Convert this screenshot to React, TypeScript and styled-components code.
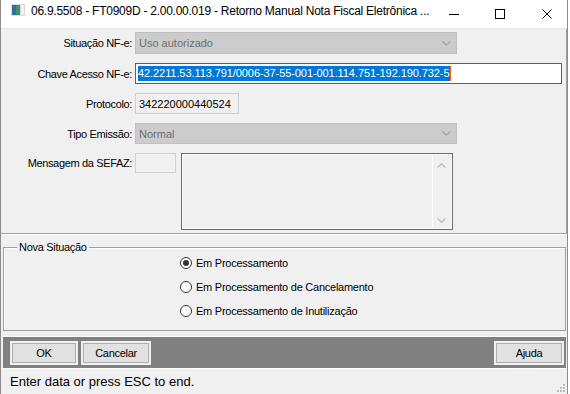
import React from 'react';
import styled, { createGlobalStyle } from 'styled-components';

const Global = createGlobalStyle`
  html, body { margin:0; padding:0; background:#fff; }
  body { font-family:"Liberation Sans", Arial, sans-serif; color:#000; }
`;

const Window = styled.div`
  width:566px; height:394px; display:flex; flex-direction:column;
  border-left:1px solid #8c8c8c; border-right:1px solid #8c8c8c;
  background:#f0f0f0; overflow:hidden;
`;

const TitleBar = styled.div`
  height:29px; flex:none; background:#fff; display:flex; align-items:flex-start;
  box-sizing:border-box; padding-top:4px; border-bottom:1px solid #e3e3e3;
`;
const AppIcon = styled.svg`margin-left:10px; flex:none;`;
const Title = styled.div`
  margin-left:6px; font-size:12px; line-height:14px; white-space:nowrap; flex:1; min-width:0;
  overflow:hidden; letter-spacing:-0.25px;
`;
const Controls = styled.div`display:flex; margin-top:-4px; height:28px; flex:none;`;
const CtlBtn = styled.div<{ $pad?: number }>`
  width:46px; height:28px; display:flex; align-items:center; justify-content:center;
  box-sizing:border-box; padding-left:${p => p.$pad ?? 0}px;
  &:last-child { width:44px; }
`;

const TopPanel = styled.div`
  height:205px; flex:none; box-sizing:border-box; padding-top:3px;
  border-right:1px solid #a0a0a0; border-bottom:1px solid #a0a0a0;
  box-shadow:0 1px 0 #fff; display:flex; flex-direction:column; gap:9px;
`;
const Row = styled.div<{ $top?: boolean }>`
  display:flex; align-items:${p => (p.$top ? 'flex-start' : 'center')}; gap:3px;
`;
const Label = styled.div`
  width:131px; text-align:right; font-size:11px; letter-spacing:-0.35px;
  line-height:20px; white-space:nowrap;
`;
const Combo = styled.div<{ $h?: number }>`
  width:322px; height:${p => p.$h ?? 21}px; box-sizing:border-box; background:#cccccc;
  border:1px solid #bfbfbf; display:flex; align-items:center; justify-content:space-between;
  padding:0 5px 0 3px; font-size:11px; color:#6d6d6d;
`;
const TextBox = styled.div<{ $w: number; $focus?: boolean }>`
  width:${p => p.$w}px; height:21px; box-sizing:border-box;
  border:1px solid ${p => (p.$focus ? '#0078d7' : '#cdcdcd')};
  background:${p => (p.$focus ? '#fff' : '#f0f0f0')};
  display:flex; align-items:center; padding-left:${p => (p.$focus ? 2 : 3)}px;
  font-size:11px; white-space:nowrap; overflow:hidden;
`;
const Selected = styled.span`
  background:#0078d7; color:#fff; line-height:15px; letter-spacing:-0.08px;
`;
const Caret = styled.span`width:1px; height:15px; background:#f7630c; flex:none;`;
const SmallBox = styled.div`
  width:41px; height:20px; box-sizing:border-box; border:1px solid #d0d0d0; background:#f0f0f0;
`;
const Memo = styled.div`
  margin-left:2px; width:272px; height:77px; box-sizing:border-box;
  border:1px solid #6e6e6e; box-shadow:inset 0 0 0 1px #fafafa;
  display:flex; justify-content:flex-end; background:#f0f0f0;
`;
const ScrollTrack = styled.div`
  width:17px; margin:2px 2px 2px 0; border-left:1px solid #fff;
  display:flex; flex-direction:column; justify-content:space-between; align-items:center;
  padding:7px 0 4px;
`;

const Group = styled.fieldset`
  margin:7px 1px 0 2px; padding:0 0 0 15px; height:90px; box-sizing:border-box;
  border:1px solid #a0a0a0; box-shadow:inset 1px 1px 0 #fff; flex:none;
`;
const Legend = styled.legend`
  padding:0 2px; margin-left:-2px; font-size:11px; line-height:12px; letter-spacing:-0.3px;
`;
const RadioList = styled.div`
  margin-left:161px; margin-top:-2px; display:flex; flex-direction:column;
`;
const RadioRow = styled.div`
  height:24px; display:flex; align-items:center; gap:4px;
  font-size:11px; letter-spacing:-0.25px;
  &:last-child { height:23px; }
`;
const RadioDot = styled.span<{ $on?: boolean }>`
  width:12px; height:12px; box-sizing:border-box; border-radius:50%;
  border:1px solid #333; background:#fff; display:flex; align-items:center; justify-content:center;
  &::after { content:""; width:6px; height:6px; border-radius:50%;
    background:${p => (p.$on ? '#333' : 'transparent')}; }
`;

const ButtonBar = styled.div`
  margin:5px 1px 0 2px; height:33px; box-sizing:border-box; flex:none;
  border-top:1px solid #fff; border-bottom:1px solid #fff; background:#808080;
  display:flex; align-items:flex-start; gap:3px; padding:4px 2px 0 7px;
`;
const Btn = styled.div<{ $w: number; $right?: boolean }>`
  width:${p => p.$w}px; height:24px; box-sizing:border-box; background:#e1e1e1;
  border:2px solid #f0f0f0; box-shadow:inset 0 0 0 1px #adadad;
  display:flex; align-items:center; justify-content:center;
  font-size:11px; letter-spacing:-0.3px; margin-left:${p => (p.$right ? 'auto' : '0')};
`;

const StatusBar = styled.div`
  flex:1; display:flex; padding:5px 2px 2px 9px; font-size:13px; line-height:15px;
`;
const Grip = styled.svg`margin-left:auto; align-self:flex-end; flex:none;`;

const Chevron = ({ up, color }: { up?: boolean; color: string }) => (
  <svg width="9" height="5" viewBox="0 0 9 5">
    <path d={up ? 'M0.5 4.5 L4.5 0.8 L8.5 4.5' : 'M0.5 0.5 L4.5 4.2 L8.5 0.5'} fill="none" stroke={color} strokeWidth="1.3" />
  </svg>
);

export default function App() {
  return (
    <>
      <Global />
      <Window>
        <TitleBar>
          <AppIcon width="14" height="12" viewBox="0 0 14 12">
            <rect x="0" y="0" width="14" height="12" fill="#d9d9d9" />
            <rect x="1" y="1" width="8" height="10" fill="#3f8f7a" />
            <rect x="1" y="1" width="4" height="10" fill="#2f6fa0" />
            <rect x="10" y="1" width="3" height="10" fill="#f2f2f2" />
          </AppIcon>
          <Title>06.9.5508 - FT0909D - 2.00.00.019 - Retorno Manual Nota Fiscal Eletrônica ...</Title>
          <Controls>
            <CtlBtn>
              <svg width="10" height="10" viewBox="0 0 10 10"><path d="M0 5.5 H10" stroke="#000" strokeWidth="1" /></svg>
            </CtlBtn>
            <CtlBtn>
              <svg width="10" height="10" viewBox="0 0 10 10"><rect x="0.5" y="0.5" width="9" height="9" fill="none" stroke="#000" strokeWidth="1" /></svg>
            </CtlBtn>
            <CtlBtn $pad={4}>
              <svg width="10" height="10" viewBox="0 0 10 10"><path d="M0.5 0.5 L9.5 9.5 M9.5 0.5 L0.5 9.5" stroke="#000" strokeWidth="1" /></svg>
            </CtlBtn>
          </Controls>
        </TitleBar>

        <TopPanel>
          <Row>
            <Label>Situação NF-e:</Label>
            <Combo $h={22}>Uso autorizado<Chevron color="#a6a6a6" /></Combo>
          </Row>
          <Row>
            <Label>Chave Acesso NF-e:</Label>
            <TextBox $w={427} $focus>
              <Selected>42.2211.53.113.791/0006-37-55-001-001.114.751-192.190.732-5</Selected>
              <Caret />
            </TextBox>
          </Row>
          <Row>
            <Label>Protocolo:</Label>
            <TextBox $w={104}>342220000440524</TextBox>
          </Row>
          <Row>
            <Label>Tipo Emissão:</Label>
            <Combo>Normal<Chevron color="#a6a6a6" /></Combo>
          </Row>
          <Row $top>
            <Label>Mensagem da SEFAZ:</Label>
            <SmallBox />
            <Memo>
              <ScrollTrack>
                <Chevron up color="#bdbdbd" />
                <Chevron color="#bdbdbd" />
              </ScrollTrack>
            </Memo>
          </Row>
        </TopPanel>

        <Group>
          <Legend>Nova Situação</Legend>
          <RadioList>
            <RadioRow><RadioDot $on />Em Processamento</RadioRow>
            <RadioRow><RadioDot />Em Processamento de Cancelamento</RadioRow>
            <RadioRow><RadioDot />Em Processamento de Inutilização</RadioRow>
          </RadioList>
        </Group>

        <ButtonBar>
          <Btn $w={68}>OK</Btn>
          <Btn $w={70}>Cancelar</Btn>
          <Btn $w={70} $right>Ajuda</Btn>
        </ButtonBar>

        <StatusBar>
          Enter data or press ESC to end.
          <Grip width="9" height="9" viewBox="0 0 9 9">
            {[[7, 1], [4, 4], [7, 4], [1, 7], [4, 7], [7, 7]].map(([x, y]) => (
              <rect key={`${x}-${y}`} x={x} y={y} width="2" height="2" fill="#bdbdbd" />
            ))}
          </Grip>
        </StatusBar>
      </Window>
    </>
  );
}
